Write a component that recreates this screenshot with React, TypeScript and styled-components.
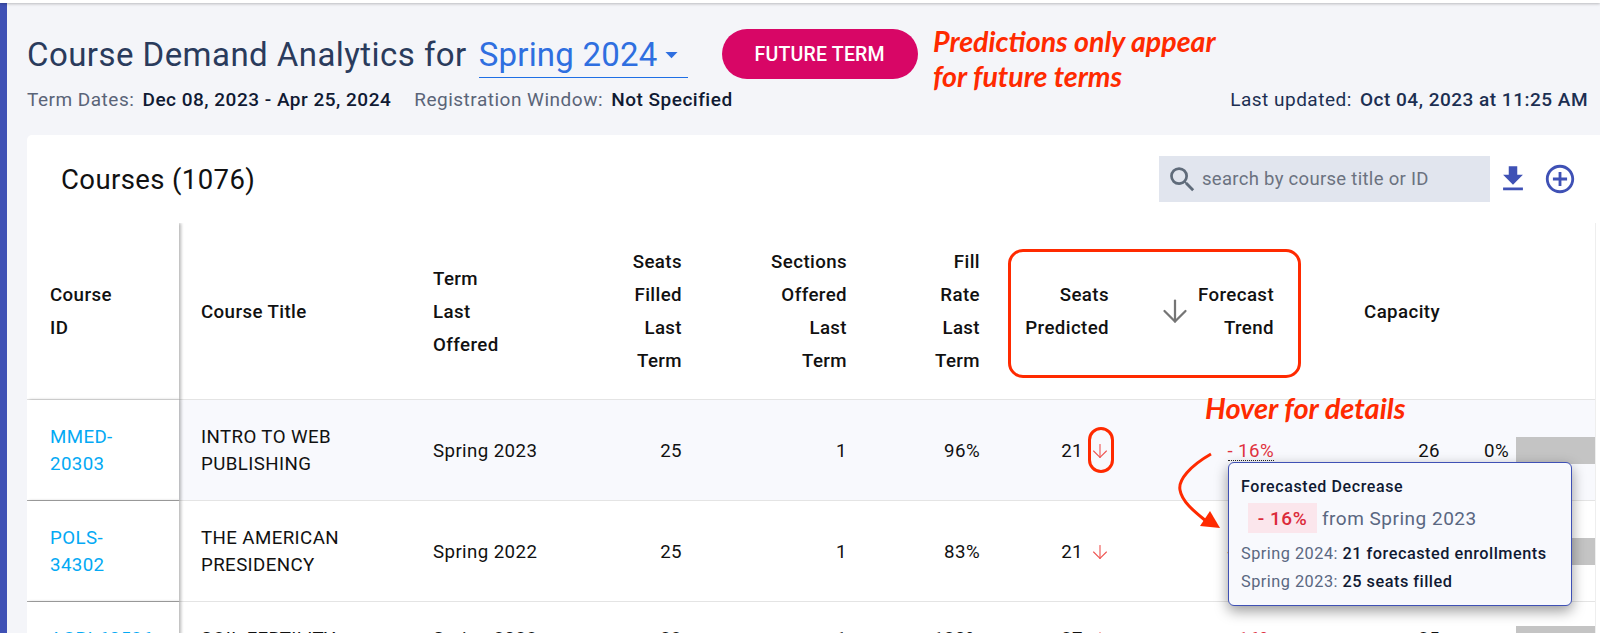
import React from 'react'
import styled, { createGlobalStyle } from 'styled-components'
import { MdArrowDropDown, MdFileDownload, MdAddCircleOutline, MdSearch } from 'react-icons/md'
import { ArrowDown } from 'lucide-react'

const GlobalStyle = createGlobalStyle`
  html, body { margin: 0; padding: 0; height: 100%; overflow: hidden; }
  body { font-family: Roboto, 'Liberation Sans', sans-serif; color: #111; }
  * { box-sizing: border-box; }
`

const rows = [
  { id: 'MMED-20303', title: 'INTRO TO WEB PUBLISHING', term: 'Spring 2023', filled: 25, sections: 1, fill: '96%', predicted: 21, trend: '- 16%', capacity: 26, used: '0%', active: true },
  { id: 'POLS-34302', title: 'THE AMERICAN PRESIDENCY', term: 'Spring 2022', filled: 25, sections: 1, fill: '83%', predicted: 21, trend: '- 16%', capacity: 26, used: '0%' },
  { id: 'AGRI-60526', title: 'SOIL FERTILITY', term: 'Spring 2023', filled: 23, sections: 1, fill: '120%', predicted: 27, trend: '- 16%', capacity: 25, used: '0%' },
]

const widths = [152, 232, 150, 143, 165, 133, 129, 165, 166, 134]

const Stack = ({ lines }: { lines: string[] }) => (
  <>
    {lines.map((line) => (
      <HeadLine key={line}>{line}</HeadLine>
    ))}
  </>
)

export default function App() {
  return (
    <Page>
      <GlobalStyle />
      <TopBar />
      <Body>
        <Rail />
        <Main>
          <Heading>
            <TitleRow>
              <Title>Course Demand Analytics for</Title>
              <TermSelect>
                <span>Spring 2024</span>
                <MdArrowDropDown size={29} color="#2f6fe0" />
              </TermSelect>
              <Badge>FUTURE TERM</Badge>
              <Note>
                Predictions only appear
                <br />
                for future terms
              </Note>
            </TitleRow>
            <MetaRow>
              <MetaGroup>
                <Meta>
                  Term Dates: <b>Dec 08, 2023 - Apr 25, 2024</b>
                </Meta>
                <Meta>
                  Registration Window: <b>Not Specified</b>
                </Meta>
              </MetaGroup>
              <Updated>
                Last updated: <b>Oct 04, 2023 at 11:25 AM</b>
              </Updated>
            </MetaRow>
          </Heading>

          <Card>
            <CardHead>
              <CardTitle>Courses (1076)</CardTitle>
              <Tools>
                <SearchBox>
                  <MdSearch size={33} color="#5f6b7a" />
                  <SearchInput placeholder="search by course title or ID" readOnly />
                </SearchBox>
                <MdFileDownload size={34} color="#3f51b5" />
                <AddIcon size={34} color="#3f51b5" />
              </Tools>
            </CardHead>

            <TableWrap>
              <Table>
                <colgroup>
                  {widths.map((w, i) => (
                    <col key={i} style={{ width: w }} />
                  ))}
                </colgroup>
                <thead>
                  <tr>
                    <FixedHead><Stack lines={['Course', 'ID']} /></FixedHead>
                    <Th>Course Title</Th>
                    <Th><Stack lines={['Term', 'Last', 'Offered']} /></Th>
                    <Th $right><Stack lines={['Seats', 'Filled', 'Last', 'Term']} /></Th>
                    <Th $right><Stack lines={['Sections', 'Offered', 'Last', 'Term']} /></Th>
                    <Th $right><Stack lines={['Fill', 'Rate', 'Last', 'Term']} /></Th>
                    <Th $right><Stack lines={['Seats', 'Predicted']} /></Th>
                    <Th $right>
                      <SortHead>
                        <ArrowDown size={36} strokeWidth={1.5} color="#757575" />
                        <div><Stack lines={['Forecast', 'Trend']} /></div>
                      </SortHead>
                    </Th>
                    <Th $right>Capacity</Th>
                    <Th />
                  </tr>
                </thead>
                <tbody>
                  {rows.map((row) => (
                    <tr key={row.id}>
                      <FixedCell><CourseLink>{row.id}</CourseLink></FixedCell>
                      <Td $active={row.active}>{row.title}</Td>
                      <Td $active={row.active}>{row.term}</Td>
                      <Td $active={row.active} $right>{row.filled}</Td>
                      <Td $active={row.active} $right>{row.sections}</Td>
                      <Td $active={row.active} $right>{row.fill}</Td>
                      <Td $active={row.active} $right>
                        <Predicted>
                          {row.predicted}
                          <ArrowDown size={22} strokeWidth={1.2} color="#ef5350" />
                        </Predicted>
                      </Td>
                      <Td $active={row.active} $right><Trend>{row.trend}</Trend></Td>
                      <Td $active={row.active} $right>{row.capacity}</Td>
                      <UsageCell $active={row.active}>
                        <Usage>
                          <UsagePercent>{row.used}</UsagePercent>
                          <UsageBar />
                        </Usage>
                      </UsageCell>
                    </tr>
                  ))}
                </tbody>
              </Table>

              <HeaderMark />
              <ArrowMark />
              <HoverNote>Hover for details</HoverNote>
              <CurvedArrow viewBox="0 0 55 85" width="55" height="85">
                <path d="M41 4C20 16 8 30 10 40C12 52 25 62 36 71" fill="none" stroke="#ff2a00" strokeWidth="3" />
                <polygon points="30,76 40,61 50,78" fill="#ff2a00" />
              </CurvedArrow>

              <Tip>
                <TipTitle>Forecasted Decrease</TipTitle>
                <TipChange>
                  <TipPill>- 16%</TipPill>
                  from Spring 2023
                </TipChange>
                <TipLine>
                  Spring 2024: <b>21 forecasted enrollments</b>
                </TipLine>
                <TipLine>
                  Spring 2023: <b>25 seats filled</b>
                </TipLine>
              </Tip>
            </TableWrap>
          </Card>
        </Main>
      </Body>
    </Page>
  )
}

const Page = styled.div`
  height: 100vh;
  display: flex;
  flex-direction: column;
  overflow: hidden;
  background: #f4f5f9;
`

const TopBar = styled.div`
  height: 3px;
  flex: none;
  background: #fff;
  box-shadow: 0 1px 3px rgba(0, 0, 0, 0.25);
  position: relative;
  z-index: 2;
`

const Body = styled.div`
  flex: 1;
  display: flex;
  min-height: 0;
`

const Rail = styled.div`
  width: 7px;
  flex: none;
  background: #3f51b5;
`

const Main = styled.main`
  flex: 1;
  min-width: 0;
  padding-left: 20px;
  display: flex;
  flex-direction: column;
`

const Heading = styled.header`
  flex: none;
  padding: 26px 12px 24px 0;
`

const TitleRow = styled.div`
  height: 50px;
  display: flex;
  align-items: center;
  position: relative;
`

const Title = styled.h1`
  margin: 0 12px 0 0;
  font-size: 33px;
  font-weight: 400;
  letter-spacing: 0.45px;
  color: #2a3b5c;
  white-space: nowrap;
`

const TermSelect = styled.div`
  width: 209px;
  height: 46px;
  display: flex;
  align-items: center;
  justify-content: space-between;
  margin-top: 2px;
  border-bottom: 1.5px solid #1f6fe5;
  font-size: 33px;
  letter-spacing: 0.2px;
  color: #2f6fe0;
  white-space: nowrap;
  svg {
    flex: none;
    margin-right: 3px;
  }
`

const Badge = styled.div`
  width: 196px;
  height: 50px;
  margin-left: 34px;
  border-radius: 25px;
  background: #d80666;
  color: #fff;
  display: flex;
  align-items: center;
  justify-content: center;
  font-size: 19.5px;
  font-weight: 500;
  letter-spacing: 0.2px;
`

const Note = styled.div`
  position: absolute;
  left: 906px;
  top: -5px;
  font-family: Lato, sans-serif;
  font-style: italic;
  font-weight: 700;
  font-size: 28.6px;
  line-height: 34.5px;
  color: #ff2a00;
  white-space: nowrap;
`

const MetaRow = styled.div`
  height: 24px;
  margin-top: 8px;
  display: flex;
  justify-content: space-between;
  align-items: center;
  font-size: 19px;
  letter-spacing: 0.5px;
  b {
    font-weight: 500;
    margin-left: 3px;
  }
`

const MetaGroup = styled.div`
  display: flex;
  gap: 23px;
`

const Meta = styled.div`
  color: #5a6478;
  b {
    color: #101a33;
  }
`

const Updated = styled.div`
  color: #1c2f52;
`

const Card = styled.section`
  flex: 1;
  min-height: 0;
  background: #fff;
  border-top-left-radius: 5px;
  display: flex;
  flex-direction: column;
`

const CardHead = styled.div`
  height: 88px;
  flex: none;
  padding: 0 23px 0 34px;
  display: flex;
  align-items: center;
  justify-content: space-between;
`

const CardTitle = styled.h2`
  margin: 0;
  font-size: 27.5px;
  font-weight: 400;
  letter-spacing: 0.4px;
  color: #111;
`

const Tools = styled.div`
  display: flex;
  align-items: center;
  gap: 6px;
`

const AddIcon = styled(MdAddCircleOutline)`
  margin-left: 7px;
`

const SearchBox = styled.div`
  width: 331px;
  height: 46px;
  padding-left: 7px;
  display: flex;
  align-items: center;
  background: #e1e5ee;
`

const SearchInput = styled.input`
  flex: 1;
  min-width: 0;
  margin-left: 1px;
  border: none;
  outline: none;
  background: transparent;
  font-family: inherit;
  font-size: 18.5px;
  letter-spacing: 0.3px;
  &::placeholder {
    color: #6b7280;
    opacity: 1;
  }
`

const TableWrap = styled.div`
  flex: 1;
  min-height: 0;
  margin-right: 4px;
  position: relative;
  overflow: hidden;
  border-right: 1px solid #eee;
`

const Table = styled.table`
  table-layout: fixed;
  width: 1569px;
  border-collapse: separate;
  border-spacing: 0;
  font-size: 18.7px;
  letter-spacing: 0.4px;
  tbody tr:last-child td:not(:last-child) {
    padding-top: 21px;
  }
`

const HeadLine = styled.div`
  line-height: 33px;
`

const Th = styled.th<{ $right?: boolean }>`
  height: 177px;
  padding: 2px 22px 0;
  font-weight: 500;
  font-size: 18.7px;
  text-align: ${({ $right }) => ($right ? 'right' : 'left')};
  border-bottom: 1px solid #e4e4e4;
  color: #111;
`

const FixedHead = styled(Th)`
  position: relative;
  z-index: 1;
  padding-left: 23px;
  box-shadow: 2px 0 3px rgba(0, 0, 0, 0.28);
`

const SortHead = styled.div`
  display: flex;
  justify-content: flex-end;
  align-items: center;
  gap: 5px;
  svg {
    margin-top: -2px;
  }
`

const Td = styled.td<{ $right?: boolean; $active?: boolean }>`
  padding: 24px 22px 22px;
  line-height: 27px;
  text-align: ${({ $right }) => ($right ? 'right' : 'left')};
  background: ${({ $active }) => ($active ? '#f8f9fd' : '#fff')};
  border-bottom: 1.5px solid #e4e4e4;
`

const FixedCell = styled.td`
  position: relative;
  z-index: 1;
  padding: 24px 25px 22px 23px;
  line-height: 27px;
  background: #fff;
  border-bottom: 1.5px solid #aaa;
  box-shadow: 2px 0 3px rgba(0, 0, 0, 0.28);
`

const CourseLink = styled.a`
  color: #03a9f4;
`

const Predicted = styled.div`
  display: flex;
  justify-content: flex-end;
  align-items: center;
  gap: 6px;
  margin-right: -2px;
`

const Trend = styled.span`
  display: inline-block;
  line-height: 17px;
  color: #e0333f;
  border-bottom: 1.5px dotted #222;
`

const UsageCell = styled(Td)`
  padding: 23px 0 23px 22px;
`

const Usage = styled.div`
  display: flex;
  align-items: center;
  gap: 7px;
`

const UsagePercent = styled.span`
  padding-top: 2px;
`

const UsageBar = styled.div`
  flex: 1;
  height: 27px;
  background: #c4c4c4;
`

const HeaderMark = styled.div`
  position: absolute;
  left: 981px;
  top: 26px;
  width: 293px;
  height: 129px;
  border: 3px solid #ff2a00;
  border-radius: 15px;
`

const ArrowMark = styled.div`
  position: absolute;
  left: 1061px;
  top: 204px;
  width: 26px;
  height: 46px;
  border: 3px solid #ff2a00;
  border-radius: 13px;
`

const HoverNote = styled.div`
  position: absolute;
  left: 1178px;
  top: 167px;
  font-family: Lato, sans-serif;
  font-style: italic;
  font-weight: 700;
  font-size: 29px;
  line-height: 36px;
  color: #ff2a00;
  white-space: nowrap;
`

const CurvedArrow = styled.svg`
  position: absolute;
  left: 1143px;
  top: 227px;
`

const Tip = styled.div`
  position: absolute;
  left: 1201px;
  top: 239px;
  width: 344px;
  height: 144px;
  padding: 13px 11px 0 12px;
  background: #f8f9fd;
  border: 1.5px solid #3f51b5;
  border-radius: 6px;
  box-shadow: 0 5px 14px rgba(0, 0, 0, 0.4);
  color: #101a33;
`

const TipTitle = styled.div`
  font-size: 16px;
  font-weight: 500;
  letter-spacing: 0.6px;
  line-height: 22px;
`

const TipChange = styled.div`
  margin: 5px 0 7px 7px;
  display: flex;
  align-items: center;
  gap: 5px;
  font-size: 19px;
  letter-spacing: 0.5px;
  color: #5a6781;
`

const TipPill = styled.span`
  width: 69px;
  height: 30px;
  display: flex;
  align-items: center;
  justify-content: center;
  background: #fbe6ec;
  color: #db2b3a;
  font-weight: 500;
`

const TipLine = styled.div`
  font-size: 16.3px;
  letter-spacing: 0.5px;
  line-height: 28px;
  color: #5a6781;
  white-space: nowrap;
  b {
    font-weight: 500;
    color: #101a33;
  }
`
